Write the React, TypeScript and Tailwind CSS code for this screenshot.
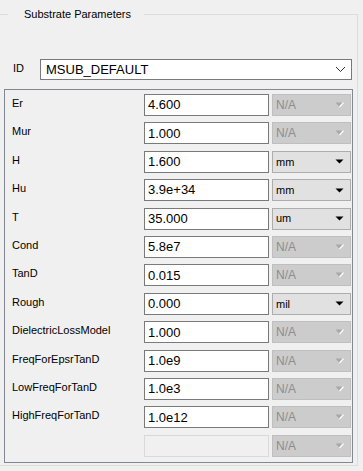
import React from "react";

type Row = { label: string; value: string; unit: string | null; empty?: boolean };

const rows: Row[] = [
  { label: "Er", value: "4.600", unit: null },
  { label: "Mur", value: "1.000", unit: null },
  { label: "H", value: "1.600", unit: "mm" },
  { label: "Hu", value: "3.9e+34", unit: "mm" },
  { label: "T", value: "35.000", unit: "um" },
  { label: "Cond", value: "5.8e7", unit: null },
  { label: "TanD", value: "0.015", unit: null },
  { label: "Rough", value: "0.000", unit: "mil" },
  { label: "DielectricLossModel", value: "1.000", unit: null },
  { label: "FreqForEpsrTanD", value: "1.0e9", unit: null },
  { label: "LowFreqForTanD", value: "1.0e3", unit: null },
  { label: "HighFreqForTanD", value: "1.0e12", unit: null },
  { label: "", value: "", unit: null, empty: true },
];

function UnitSelect({ unit }: { unit: string | null }) {
  if (!unit) {
    return (
      <div className="flex items-center justify-between w-[79px] h-[22px] border border-[#bfbfbf] bg-[#cccccc] pl-[3px] pr-[6px] text-[12px] text-[#8d8d8d]">
        <span>N/A</span>
        <svg width="9" height="6" viewBox="0 0 9 6">
          <path d="M0.5 0.5 L8.5 0.5 L4.5 5 Z" fill="#a8a8a8" />
          <path d="M8.5 0.5 L4.5 5" stroke="#ffffff" strokeWidth="1.2" />
        </svg>
      </div>
    );
  }
  return (
    <div className="flex items-center justify-between w-[79px] h-[22px] border border-[#adadad] bg-[#e1e1e1] pl-[3px] pr-[6px] text-[11px] text-black">
      <span>{unit}</span>
      <svg width="9" height="5" viewBox="0 0 9 5">
        <path d="M0.5 0.5 L8.5 0.5 L4.5 4.5 Z" fill="#000" />
      </svg>
    </div>
  );
}

export default function App() {
  return (
    <div
      className="w-[363px] h-[471px] bg-[#f0f0f0] overflow-hidden pt-[14px] text-black"
      style={{ fontFamily: '"Liberation Sans", Arial, sans-serif' }}
    >
      <div className="relative -ml-px w-[359px] h-[452px] border border-[#dcdcdc] pt-[44px]">
        <span className="absolute left-[8px] -top-[7px] bg-[#f0f0f0] pl-[16px] pr-[13px] text-[11px] leading-[13px]">
          Substrate Parameters
        </span>

        <div className="flex items-center h-[21px]">
          <span className="w-[40px] pl-[13px] text-[11px] -mt-[2px]">ID</span>
          <div className="flex items-center justify-between w-[312px] h-[21px] border border-[#7a7a7a] bg-white pl-[5px] pr-[5px] text-[13px]">
            <span>MSUB_DEFAULT</span>
            <svg width="11" height="7" viewBox="0 0 11 7">
              <path d="M1 1 L5.5 5.5 L10 1" stroke="#333" strokeWidth="1" fill="none" />
            </svg>
          </div>
        </div>

        <div className="mt-[9px] ml-[4px] w-[349px] h-[374px] border border-[#828790] pt-[4px]">
          {rows.map((r, i) => (
            <div key={i} className="flex h-[28.42px]">
              <span className="w-[139px] pl-[7px] pt-[3px] text-[11px] leading-[13px]">{r.label}</span>
              {r.empty ? (
                <div className="w-[125px] h-[22px] border border-[#d9d9d9] bg-[#f0f0f0]" />
              ) : (
                <div className="flex items-center w-[125px] h-[22px] border border-[#7a7a7a] bg-white pl-[3px] text-[13px]">
                  {r.value}
                </div>
              )}
              <div className="ml-[3px]">
                <UnitSelect unit={r.unit} />
              </div>
            </div>
          ))}
        </div>
      </div>
    </div>
  );
}
